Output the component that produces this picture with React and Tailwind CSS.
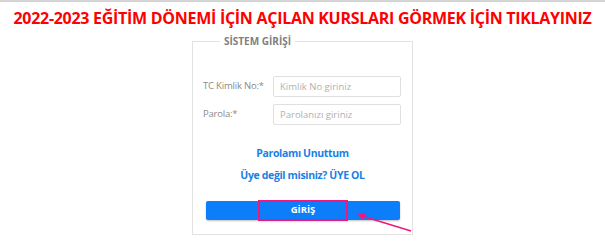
export default function App() {
  return (
    <div className="relative w-[605px] h-[250px] bg-white border-t-2 border-[#d4d4d4] font-['Open_Sans',sans-serif] overflow-hidden">
      <h1 className="text-center text-[#ff0000] font-bold text-[16px] leading-[20px] mt-[6px] tracking-[-0.28px]">
        2022-2023 EĞİTİM DÖNEMİ İÇİN AÇILAN KURSLARI GÖRMEK İÇİN TIKLAYINIZ
      </h1>

      <fieldset className="ml-[192px] mt-[7px] w-[221px] h-[200px] border border-[#e2e2e2] px-[10px]">
        <legend className="ml-[17px] px-[4px] text-[10px] font-bold text-[#808080] leading-[12px]">
          SİSTEM GİRİŞİ
        </legend>

        <div className="mt-[29px] flex flex-col gap-[7px]">
          <div className="flex items-center">
            <label className="w-[70px] text-[9.5px] text-[#8a8a8a] tracking-[-0.2px]">TC Kimlik No:*</label>
            <input
              className="w-[128px] h-[21px] border border-[#e0e0e0] rounded-[2px] px-[6px] text-[9.5px] placeholder:text-[#b0b0b0] outline-none"
              placeholder="Kimlik No giriniz"
            />
          </div>
          <div className="flex items-center">
            <label className="w-[70px] text-[9.5px] text-[#8a8a8a] tracking-[-0.2px]">Parola:*</label>
            <input
              type="password"
              className="w-[128px] h-[21px] border border-[#e0e0e0] rounded-[2px] px-[6px] text-[9.5px] placeholder:text-[#b0b0b0] outline-none"
              placeholder="Parolanızı giriniz"
            />
          </div>
        </div>

        <div className="mt-[21px] flex flex-col items-center gap-[8px] text-[10.5px] font-bold text-[#1a7fe6] leading-[14px] tracking-[-0.35px]">
          <a href="#">Parolamı Unuttum</a>
          <a href="#">Üye değil misiniz? ÜYE OL</a>
        </div>

        <button className="mt-[19px] ml-[3px] w-[194px] h-[19px] bg-[#0d7ef9] rounded-[2px] shadow-[0_1px_2px_rgba(0,0,0,0.25)] flex items-center justify-center">
          <span className="w-[90px] h-[21px] border-2 border-[#f0187e] flex items-center justify-center text-white text-[9.5px] font-bold">
            GİRİŞ
          </span>
        </button>
      </fieldset>

      <svg className="absolute left-0 top-0" width="605" height="250" viewBox="0 0 605 250">
        <line x1="411" y1="229" x2="362" y2="214" stroke="#f0187e" strokeWidth="1.6" />
        <path d="M357 212.5 L366 211 L363.5 218 Z" fill="#f0187e" />
      </svg>
    </div>
  )
}
